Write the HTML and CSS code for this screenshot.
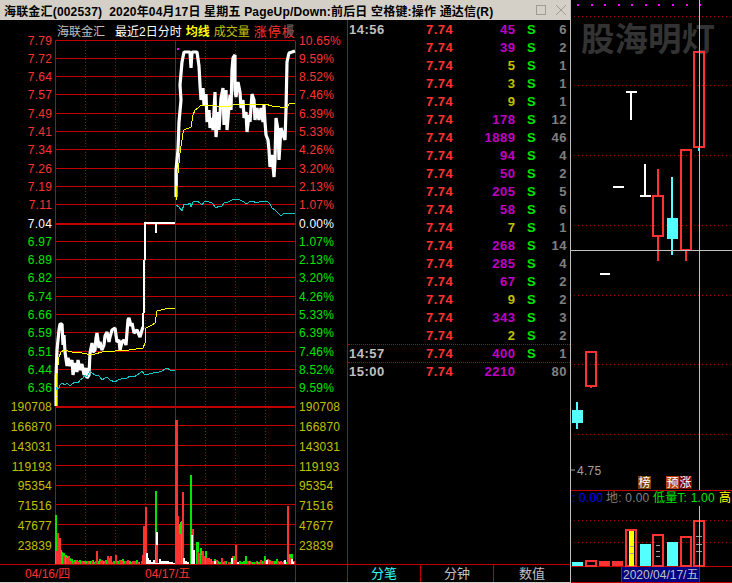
FILE: index.html
```html
<html>
    <head>
        <title>海联金汇(002537)</title>
        <meta charset="utf-8">
        <link rel="stylesheet" href="styles.css">
    </head>
    <body>
        <div class="main">
            <div class="titlebar">
                <span>海联金汇(002537)&nbsp; 2020年04月17日 星期五 PageUp/Down:前后日 空格键:操作 通达信(R)</span>
                <div class="winbtns">
                    <i class="btn-max"></i>
                    <svg class="btn-close" width="12" height="12" viewBox="0 0 12 12"><path d="M1 1L11 11M11 1L1 11" /></svg>
                </div>
            </div>
            <div class="panes">
                <div class="chart">
                    <div class="chart-head">
                        <span class="gray">海联金汇</span>
                        <span class="white">最近2日分时</span>
                        <span class="yellow"><b>均线</b></span>
                        <span class="olive">成交量</span>
                        <span class="red">涨停板</span>
                    </div>
                    <svg class="chart-svg" width="347" height="542" viewBox="0 40 347 542">
                        <!-- price grid -->
                        <path class="grid" d="M55 40.5H295M55 58.5H295M55 76.5H295M55 94.5H295M55 113.5H295M55 131.5H295M55 149.5H295M55 168.5H295M55 186.5H295M55 204.5H295M55 241.5H295M55 259.5H295M55 277.5H295M55 296.5H295M55 314.5H295M55 332.5H295M55 351.5H295M55 369.5H295M55 387.5H295" />
                        <path class="grid" d="M55 425.5H295M55 445.5H295M55 465.5H295M55 485.5H295M55 504.5H295M55 524.5H295M55 544.5H295" />
                        <path class="grid-bold" d="M55 224H295M55 407H295" />
                        <path class="grid-dot" d="M85.5 41V564M115.5 41V564M145.5 41V564M205.5 41V564M235.5 41V564M265.5 41V564" />
                        <path class="grid" d="M55.5 41V564M175.5 41V564M295.5 41V582M0 564.5H347" />

                        <!-- day 1 -->
                        <polyline class="price" points="56,406 56,377 57,350 59,330 60,324 62,324 63,345 64,335 65,352 67,366 68,358 70,366 72,360 73,375 75,363 77,372 78,360 80,370 82,364 84,375 86,368 87,378 89,375 90,353 92,343 93,352 95,350 96,338 97,333 99,348 100,342 102,350 104,345 105,336 107,332 109,342 110,337 112,330 115,328 117,342 119,340 120,350 122,342 124,340 126,345 128,320 129,318 131,326 132,323 134,333 137,330 140,337 142,330 143,327" />
                        <polyline class="price-thin" points="143,327 144,300 144,270 145,250 145,223 175,223" />
                        <path class="price-thin" d="M156 223V233" />
                        <polyline class="avg" points="56,406 56,397 57,373 59,357 61,352 64,350 72,352 82,353 87,354 95,354 102,352 115,351 129,350 143,348 145,343 146,328 152,325 155,323 157,311 165,309 175,308" />
                        <polyline class="index" points="56,387 57,390 59,388 60,385 62,383 65,385 67,383 70,386 72,384 75,382 78,383 80,380 83,378 85,375 87,377 90,371 92,373 95,375 98,375 100,377 102,380 105,378 107,377 110,380 115,382 118,380 124,378 126,379 130,376 134,377 137,375 140,373 142,371 144,374 149,374 153,373 159,372 162,371 165,369 167,368 170,370 175,371" />

                        <!-- day 2 -->
                        <polyline class="price" points="176,197 176,170 178,150 179,122 181,100 180,85 182,62 184,52 190,52 191,68 192,52 197,52 199,66 200,85 201,100 203,88 204,105 206,94 207,122 209,110 210,128 212,118 213,130 215,92 216,137 218,112 219,130 221,98 223,88 224,125 226,90 227,130 228,118 230,95 231,110 232,70 233,58 235,55 235,90 236,97 238,82 240,92 241,108 243,100 244,118 246,112 247,132 249,115 250,122 252,94 254,100 255,120 257,108 259,120 261,108 263,122 264,105 265,122 266,135 268,140 269,150 270,167 272,155 274,177 275,160 276,118 278,130 279,160 281,128 283,135 285,140 286,110 287,62 289,53 295,51" />
                        <polyline class="avg" points="176,200 178,173 180,153 183,133 184,130 191,127 193,115 195,110 198,108 201,105 217,106 229,107 235,104 265,104 272,106 287,108 289,104 295,103" />
                        <polyline class="index" points="176,205 179,207 182,211 184,204 187,205 190,203 191,207 193,202 197,201 200,203 202,205 205,201 209,202 212,203 216,208 219,206 222,206 225,202 228,202 232,200 237,199 240,200 242,201 247,204 249,202 252,201 257,203 261,201 267,201 270,204 272,208 275,210 277,212 281,216 283,214 285,213 290,214 295,213" />
                        <rect class="mark" x="177" y="48" width="2" height="2" />

                        <!-- volume -->
                        <path class="vol-green" d="M56 515V564M57 540V564M59 550V564M61 550V564M62 552V564M64 553V564M66 555V564M68 556V564M70 558V564M72 559V564M75 560V564M78 561V564M80 560V564M85 561V564M90 561V564M93 560V564M97 561V564M100 559V564M106 560V564M112 562V564M118 561V564M123 559V564M130 561V564M137 560V564M143 561V564M144 543V564M156 491V564M177 500V564M179 524V564M181 522V564M182 521V564M191 475V564M197 542V564M198 542V564M201 548V564M206 551V564M211 559V564M218 561V564M220 562V564M226 561V564M230 562V564M235 556V564M240 561V564M244 561V564M246 556V564M254 562V564M257 561V564M265 556V564M270 560V564M277 559V564M284 561V564M290 554V564M292 554V564M73 561V564M76 561V564M81 562V564M83 561V564M87 561V564M94 562V564M99 561V564M104 561V564M109 562V564M114 561V564M119 561V564M121 560V564M125 561V564M127 562V564M132 562V564M134 561V564M139 562V564M205 556V564M209 558V564M215 559V564M224 562V564M232 561V564M242 562V564M250 561V564M252 562V564M259 562V564M263 561V564M272 562V564M275 561V564M279 562V564M286 562V564" />
                        <path class="vol-red" d="M57 551V564M58 533V564M60 538V564M64 556V564M67 558V564M69 556V564M74 562V564M77 560V564M82 561V564M84 562V564M88 561V564M92 561V564M96 561V564M97 551V564M102 560V564M108 556V564M110 558V564M111 556V564M113 562V564M116 555V564M117 562V564M120 560V564M128 560V564M135 561V564M142 561V564M143 555V564M144 526V564M146 507V564M157 545V564M176 420V564M177 420V564M178 516V564M180 534V564M183 492V564M193 529V564M198 552V564M199 553V564M202 555V564M203 551V564M208 558V564M213 561V564M222 558V564M229 562V564M233 556V564M236 545V564M248 561V564M261 560V564M268 559V564M273 561V564M281 561V564M288 506V564M291 558V564M294 561V564M71 561V564M79 562V564M101 561V564M105 561V564M122 561V564M126 561V564M133 561V564M138 562V564M204 556V564M207 558V564M210 559V564M217 560V564M225 561V564M234 560V564M239 562V564M251 562V564M256 562V564M264 561V564M271 561V564M278 561V564M283 562V564" />
                        <path class="vol-white" d="M147 553V564M148 558V564M150 560V564M152 562V564M154 560V564M157 532V545M160 559V564M162 561V564M164 561V564M166 561V564M168 561V564M170 562V564M172 562V564M184 558V564M186 561V564M188 562V564M192 535V564M194 550V564M215 561V564M232 558V564M238 562V564M267 560V564M285 560V564M292 559V564M293 562V564M147 563.5H175" />

                        <!-- price axis -->
                        <g class="axis up">
                            <text x="52" y="45">7.79</text><text x="52" y="63">7.72</text><text x="52" y="81">7.64</text><text x="52" y="99">7.57</text><text x="52" y="118">7.49</text><text x="52" y="136">7.41</text><text x="52" y="154">7.34</text><text x="52" y="173">7.26</text><text x="52" y="191">7.19</text><text x="52" y="209">7.11</text>
                        </g>
                        <text class="axis flat" x="52" y="228">7.04</text>
                        <g class="axis down">
                            <text x="52" y="246">6.97</text><text x="52" y="264">6.89</text><text x="52" y="282">6.82</text><text x="52" y="301">6.74</text><text x="52" y="319">6.66</text><text x="52" y="337">6.59</text><text x="52" y="356">6.51</text><text x="52" y="374">6.44</text><text x="52" y="392">6.36</text>
                        </g>
                        <g class="axis pct up">
                            <text x="299" y="45">10.65%</text><text x="299" y="63">9.59%</text><text x="299" y="81">8.52%</text><text x="299" y="99">7.46%</text><text x="299" y="118">6.39%</text><text x="299" y="136">5.33%</text><text x="299" y="154">4.26%</text><text x="299" y="173">3.20%</text><text x="299" y="191">2.13%</text><text x="299" y="209">1.07%</text>
                        </g>
                        <text class="axis pct flat" x="299" y="228">0.00%</text>
                        <g class="axis pct down">
                            <text x="299" y="246">1.07%</text><text x="299" y="264">2.13%</text><text x="299" y="282">3.20%</text><text x="299" y="301">4.26%</text><text x="299" y="319">5.33%</text><text x="299" y="337">6.39%</text><text x="299" y="356">7.46%</text><text x="299" y="374">8.52%</text><text x="299" y="392">9.59%</text>
                        </g>

                        <!-- volume axis -->
                        <g class="axis vol">
                            <text x="52" y="411">190708</text><text x="52" y="431">166870</text><text x="52" y="451">143031</text><text x="52" y="471">119193</text><text x="52" y="490">95354</text><text x="52" y="510">71516</text><text x="52" y="530">47677</text><text x="52" y="550">23839</text>
                        </g>
                        <g class="axis pct vol">
                            <text x="299" y="411">190708</text><text x="299" y="431">166870</text><text x="299" y="451">143031</text><text x="299" y="471">119193</text><text x="299" y="490">95354</text><text x="299" y="510">71516</text><text x="299" y="530">47677</text><text x="299" y="550">23839</text>
                        </g>

                        <text class="date" x="25" y="578">04/16/四</text>
                        <text class="date" x="145" y="578">04/17/五</text>
                    </svg>
                </div>
                <div class="trades">
                    <div class="ticks">
                        <div class="tick"><span class="t">14:56</span><span class="p">7.74</span><span class="v">45</span><span class="s">S</span><span class="n">6</span></div>
                        <div class="tick"><span class="t"></span><span class="p">7.74</span><span class="v">39</span><span class="s">S</span><span class="n">2</span></div>
                        <div class="tick"><span class="t"></span><span class="p">7.74</span><span class="v small">5</span><span class="s">S</span><span class="n">1</span></div>
                        <div class="tick"><span class="t"></span><span class="p">7.74</span><span class="v small">3</span><span class="s">S</span><span class="n">1</span></div>
                        <div class="tick"><span class="t"></span><span class="p">7.74</span><span class="v small">9</span><span class="s">S</span><span class="n">1</span></div>
                        <div class="tick"><span class="t"></span><span class="p">7.74</span><span class="v">178</span><span class="s">S</span><span class="n">12</span></div>
                        <div class="tick"><span class="t"></span><span class="p">7.74</span><span class="v">1889</span><span class="s">S</span><span class="n">46</span></div>
                        <div class="tick"><span class="t"></span><span class="p">7.74</span><span class="v">94</span><span class="s">S</span><span class="n">4</span></div>
                        <div class="tick"><span class="t"></span><span class="p">7.74</span><span class="v">50</span><span class="s">S</span><span class="n">2</span></div>
                        <div class="tick"><span class="t"></span><span class="p">7.74</span><span class="v">205</span><span class="s">S</span><span class="n">5</span></div>
                        <div class="tick"><span class="t"></span><span class="p">7.74</span><span class="v">58</span><span class="s">S</span><span class="n">6</span></div>
                        <div class="tick"><span class="t"></span><span class="p">7.74</span><span class="v small">7</span><span class="s">S</span><span class="n">1</span></div>
                        <div class="tick"><span class="t"></span><span class="p">7.74</span><span class="v">268</span><span class="s">S</span><span class="n">14</span></div>
                        <div class="tick"><span class="t"></span><span class="p">7.74</span><span class="v">285</span><span class="s">S</span><span class="n">4</span></div>
                        <div class="tick"><span class="t"></span><span class="p">7.74</span><span class="v">67</span><span class="s">S</span><span class="n">2</span></div>
                        <div class="tick"><span class="t"></span><span class="p">7.74</span><span class="v small">9</span><span class="s">S</span><span class="n">2</span></div>
                        <div class="tick"><span class="t"></span><span class="p">7.74</span><span class="v">343</span><span class="s">S</span><span class="n">3</span></div>
                        <div class="tick"><span class="t"></span><span class="p">7.74</span><span class="v small">2</span><span class="s">S</span><span class="n">2</span></div>
                        <div class="tick sep"><span class="t">14:57</span><span class="p">7.74</span><span class="v">400</span><span class="s">S</span><span class="n">1</span></div>
                        <div class="tick sep"><span class="t">15:00</span><span class="p">7.74</span><span class="v">2210</span><span class="s"></span><span class="n">80</span></div>
                    </div>
                    <div class="tabs">
                        <div class="tab active">分笔</div>
                        <div class="tab">分钟</div>
                        <div class="tab">数值</div>
                    </div>
                </div>
            </div>
        </div>
        <div class="kline">
            <svg width="162" height="583" viewBox="570 0 162 583">
                <text class="watermark" x="581" y="51">股海明灯</text>
                <path class="k-dot" d="M570 16.5H732M570 85.5H732M570 155.5H732M570 225.5H732M570 295.5H732M570 364.5H732M570 434.5H732M570 520.5H732M570 542.5H732" />
                <path class="marks" d="M577 5H579M591 5H593M604 5H606M618 5H620M631 5H633M645 5H647M658 5H660M672 5H674M686 5H688M699 5H701" />

                <!-- candles -->
                <path class="k-white" d="M626 91.5H637M631 92V120M613 187H624M645 164V196M640 196H651M600 274H610" />
                <path class="k-wick-red" d="M658 169V195M658 237V261M686 251V261M591 386V388" />
                <rect class="k-up" x="653" y="196" width="10" height="40" />
                <path class="k-wick-cyan" d="M672 177V255M577 402V429M699 147V151" />
                <rect class="k-down" x="667" y="218" width="11" height="21" />
                <rect class="k-up" x="681" y="150" width="10" height="100" />
                <rect class="k-up" x="694" y="52" width="10" height="95" />
                <rect class="k-up" x="586" y="351.5" width="10" height="34" />
                <rect class="k-down" x="572" y="410" width="11" height="13" />

                <path class="k-axis" d="M571 470H575" />
                <text class="k-price" x="577" y="475">4.75</text>

                <rect class="tag-brown" x="638" y="476" width="13" height="13" />
                <rect class="tag-orange" x="666" y="476" width="13" height="13" />
                <rect class="tag-dark" x="679" y="476" width="13" height="13" />
                <text class="tag" x="638.5" y="487">榜</text>
                <text class="tag" x="666.5" y="487">预</text>
                <text class="tag" x="679.5" y="487">涨</text>

                <!-- indicator strip -->
                <rect class="k-strip" x="571" y="491" width="161" height="14" />
                <path class="k-line" d="M570 490.5H732M570 566.5H732M570 582.5H732M621.5 567V582M699.5 567V582" />
                <text class="ind blue" x="572" y="502">: 0.00</text>
                <text class="ind gray" x="606" y="502">地: 0.00</text>
                <text class="ind green" x="653" y="502">低量T: 1.00</text>
                <text class="ind yellow" x="719" y="502">高</text>

                <!-- volume bars -->
                <rect class="k-vol-cyan" x="572" y="562" width="11" height="4" />
                <rect class="k-vol" x="586" y="561" width="10" height="5" />
                <rect class="k-vol-red" x="599" y="561" width="11" height="5" />
                <rect class="k-vol-red" x="612" y="561" width="11" height="5" />
                <rect class="k-vol" x="626" y="530" width="10" height="36" />
                <rect class="k-vol-yellow" x="629" y="531" width="5" height="35" />
                <rect class="k-vol-cyan" x="640" y="544" width="11" height="22" />
                <rect class="k-vol" x="653" y="535" width="10" height="31" />
                <rect class="k-vol-cyan" x="667" y="542" width="11" height="24" />
                <rect class="k-vol" x="681" y="537" width="10" height="29" />
                <rect class="k-vol" x="694" y="521" width="10" height="45" />
                <path class="k-tick" d="M656 545H660M656 551H660M656 556H660M630 546H634M630 553H634M696 536H702M696 544H702M696 551H702" />

                <rect class="date-box" x="622" y="567" width="77" height="15" />
                <text class="date-text" x="623" y="579">2020/04/17/五</text>

                <path class="k-cross" d="M570.5 0V583M570 250.5H732M699.5 0V490M699.5 506V566" />
            </svg>
        </div>
    </body>
</html>
```

FILE: styles.css
```css
html, body {margin:0;padding:0;width:732px;height:583px;overflow:hidden;background:#000;}
body {display:flex;font-family:"Liberation Sans","Noto Sans CJK SC",sans-serif;font-size:12px;}

.main {width:570px;height:583px;display:flex;flex-direction:column;background:#d4d0c8;}
.titlebar {height:20px;display:flex;justify-content:space-between;align-items:center;padding:0 3px 0 4px;color:#000;font-weight:bold;font-size:12px;letter-spacing:.18px;white-space:nowrap;box-sizing:border-box;}
.winbtns {display:flex;align-items:center;gap:9px;}
.btn-max {display:block;width:8px;height:8px;border:1px solid #a09c94;}
.btn-close path {stroke:#a09c94;stroke-width:1;fill:none;}

.panes {display:flex;height:562px;background:#000;}

.chart {width:347px;display:flex;flex-direction:column;}
.chart-head {position:relative;width:295px;height:20px;flex:none;box-sizing:border-box;padding-left:57px;display:flex;align-items:center;white-space:nowrap;}
.chart-head::after {content:"";position:absolute;left:287px;top:4px;width:6px;height:11px;background:#555;opacity:.7;}
.chart-head span {margin-right:4px;}
.chart-head .gray {color:#c0c0c0;margin-right:10px;}
.chart-head .white {color:#fff;}
.chart-head .yellow {color:#ff0;}
.chart-head .olive {color:#c0c000;}
.chart-head .red {color:#ff3232;font-size:13px;letter-spacing:1px;margin-right:0;}
.chart-svg {display:block;overflow:visible;}

.grid {stroke:#c00000;stroke-width:1;fill:none;shape-rendering:crispEdges;}
.grid-bold {stroke:#c00000;stroke-width:2;fill:none;shape-rendering:crispEdges;}
.grid-dot {stroke:#b00000;stroke-width:1;stroke-dasharray:1 2;fill:none;shape-rendering:crispEdges;}
.price {stroke:#fff;stroke-width:3.2;fill:none;stroke-linejoin:bevel;}
.price-thin {stroke:#fff;stroke-width:2;fill:none;shape-rendering:crispEdges;}
.avg {stroke:#ff0;stroke-width:1;fill:none;shape-rendering:crispEdges;}
.index {stroke:#14c8c8;stroke-width:1;fill:none;shape-rendering:crispEdges;}
.mark {fill:#ff00ff;}
.vol-green, .vol-red, .vol-white {stroke-width:1.4;fill:none;shape-rendering:crispEdges;}
.vol-green {stroke:#00e600;}
.vol-red {stroke:#ff3232;}
.vol-white {stroke:#fff;}

.axis {font-size:12px;letter-spacing:.2px;text-anchor:end;}
.axis.pct {text-anchor:start;}
.up {fill:#ff3232;}
.down {fill:#00e600;}
.flat {fill:#fff;}
.vol {fill:#c0c000;}
.date {fill:#ff3232;font-size:12px;}

.trades {width:223px;display:flex;flex-direction:column;border-left:1px solid #c00000;box-sizing:border-box;}
.ticks {height:544px;box-sizing:border-box;}
.tick {height:18px;box-sizing:border-box;display:grid;grid-template-columns:78px 34px 55.5px 11.5px 8px 34px;align-items:center;font-size:13px;font-weight:bold;letter-spacing:.5px;}
.tick.sep {border-top:1px dotted #c00000;}
.t {color:#c0c0c0;padding-left:1px;}
.p {color:#ff3232;}
.v {color:#c000c0;text-align:right;grid-column:3;}
.v.small {color:#c0c000;}
.s {color:#00e600;grid-column:5;}
.n {color:#808080;text-align:right;grid-column:6;padding-right:2px;}
.tabs {height:18px;display:flex;border-top:1px solid #c00000;box-sizing:border-box;}
.tab {color:#c0c0c0;font-size:13px;text-align:center;line-height:17px;border-right:1px solid #c00000;box-sizing:border-box;width:73px;}
.tab:last-child {border-right:none;flex:1;}
.tab.active {color:#32ffff;}

.kline {width:162px;height:583px;}
.kline svg {display:block;}
.watermark {fill:#333;font-size:33.5px;font-weight:bold;}
.k-dot {stroke:#a00000;stroke-width:1;stroke-dasharray:1 3;fill:none;shape-rendering:crispEdges;}
.marks {stroke:#ff00ff;stroke-width:2;fill:none;shape-rendering:crispEdges;}
.k-white {stroke:#fff;stroke-width:2;fill:none;shape-rendering:crispEdges;}
.k-wick-red {stroke:#ff3232;stroke-width:2;fill:none;shape-rendering:crispEdges;}
.k-wick-cyan {stroke:#54ffff;stroke-width:2;fill:none;shape-rendering:crispEdges;}
.k-up {stroke:#ff3232;stroke-width:2;fill:none;shape-rendering:crispEdges;}
.k-down {fill:#54ffff;}
.k-axis {stroke:#a0a0a0;stroke-width:1;fill:none;}
.k-price {fill:#a0a0a0;font-size:12px;letter-spacing:.3px;}
.tag-brown {fill:#804000;}
.tag-orange {fill:#b04010;}
.tag-dark {fill:#800000;}
.tag {fill:#fff;font-size:12px;}
.k-strip {fill:#000;}
.k-line {stroke:#c00000;stroke-width:1;fill:none;shape-rendering:crispEdges;}
.ind {font-size:12px;letter-spacing:.2px;}
.ind.blue {fill:#0000ff;}
.ind.gray {fill:#808080;}
.ind.green {fill:#00e600;}
.ind.yellow {fill:#ff0;}
.k-vol {stroke:#ff3232;stroke-width:2;fill:none;shape-rendering:crispEdges;}
.k-vol-red {fill:#ff3232;}
.k-vol-cyan {fill:#54ffff;}
.k-vol-yellow {fill:#ff0;}
.k-tick {stroke:#a0a0a0;stroke-width:1;fill:none;shape-rendering:crispEdges;}
.date-box {fill:#000080;}
.date-text {fill:#c0c0c0;font-size:12px;}
.k-cross {stroke:#c0c0c0;stroke-width:1;fill:none;shape-rendering:crispEdges;}
```
